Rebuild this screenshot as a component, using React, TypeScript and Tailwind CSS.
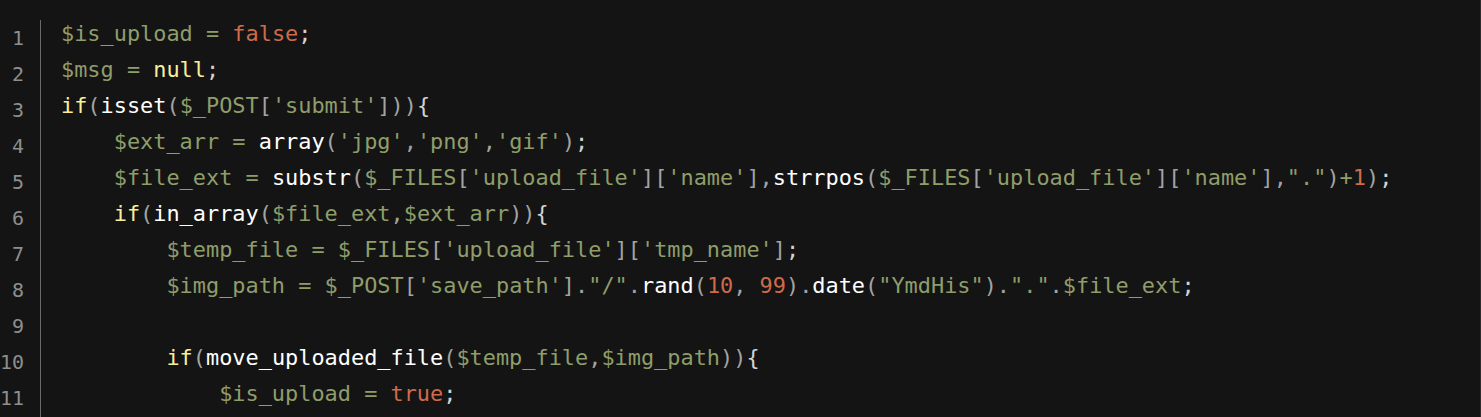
import React from "react";

type T = [string, string];

const V = "text-[#8f9d6a]";
const S = "text-[#8f9d6a]";
const K = "text-[#f9ee98]";
const F = "text-[#ffffff]";
const C = "text-[#cf6a4c]";
const P = "text-[#a3a3a3]";
const E = "text-[#d4d4d4]";

const lines: T[][] = [
  [["$is_upload", V], [" = ", V], ["false", C], [";", E]],
  [["$msg", V], [" = ", V], ["null", K], [";", E]],
  [["if", K], ["(", P], ["isset", F], ["(", P], ["$_POST", V], ["[", P], ["'submit'", S], ["]", P], [")", P], [")", P], ["{", E]],
  [["    ", P], ["$ext_arr", V], [" = ", V], ["array", F], ["(", P], ["'jpg'", S], [",", P], ["'png'", S], [",", P], ["'gif'", S], [")", P], [";", E]],
  [["    ", P], ["$file_ext", V], [" = ", V], ["substr", F], ["(", P], ["$_FILES", V], ["[", P], ["'upload_file'", S], ["]", P], ["[", P], ["'name'", S], ["]", P], [",", P], ["strrpos", F], ["(", P], ["$_FILES", V], ["[", P], ["'upload_file'", S], ["]", P], ["[", P], ["'name'", S], ["]", P], [",", P], ['"."', S], [")", P], ["+", V], ["1", C], [")", P], [";", E]],
  [["    ", P], ["if", K], ["(", P], ["in_array", F], ["(", P], ["$file_ext", V], [",", P], ["$ext_arr", V], [")", P], [")", P], ["{", E]],
  [["        ", P], ["$temp_file", V], [" = ", V], ["$_FILES", V], ["[", P], ["'upload_file'", S], ["]", P], ["[", P], ["'tmp_name'", S], ["]", P], [";", E]],
  [["        ", P], ["$img_path", V], [" = ", V], ["$_POST", V], ["[", P], ["'save_path'", S], ["]", P], [".", P], ['"/"', S], [".", P], ["rand", F], ["(", P], ["10", C], [", ", P], ["99", C], [")", P], [".", P], ["date", F], ["(", P], ['"YmdHis"', S], [")", P], [".", P], ['"."', S], [".", P], ["$file_ext", V], [";", E]],
  [],
  [["        ", P], ["if", K], ["(", P], ["move_uploaded_file", F], ["(", P], ["$temp_file", V], [",", P], ["$img_path", V], [")", P], [")", P], ["{", E]],
  [["            ", P], ["$is_upload", V], [" = ", V], ["true", C], [";", E]],
];

export default function App() {
  return (
    <div className="w-[1481px] h-[417px] overflow-hidden bg-[#141414] border-r border-[#2c2c2c] flex">
      <div
        className="w-[24px] shrink-0 pt-[20px] flex flex-col items-end text-[#8e8e8e] text-[20px] leading-[36px]"
        style={{ fontFamily: "'DejaVu Sans Mono', monospace" }}
      >
        {lines.map((_, i) => (
          <div key={i} className="whitespace-nowrap h-[36px]">
            {i + 1}
          </div>
        ))}
      </div>
      <div className="ml-[16px] mt-[20px] w-px shrink-0 bg-[#6b6b6b]" />
      <div
        className="pl-[20px] pt-[16px] text-[21.9px] leading-[36px] whitespace-pre"
        style={{ fontFamily: "'DejaVu Sans Mono', monospace" }}
      >
        {lines.map((ln, i) => (
          <div key={i} className="h-[36px]">
            {ln.map(([t, c], j) => (
              <span key={j} className={c}>
                {t}
              </span>
            ))}
          </div>
        ))}
      </div>
    </div>
  );
}
